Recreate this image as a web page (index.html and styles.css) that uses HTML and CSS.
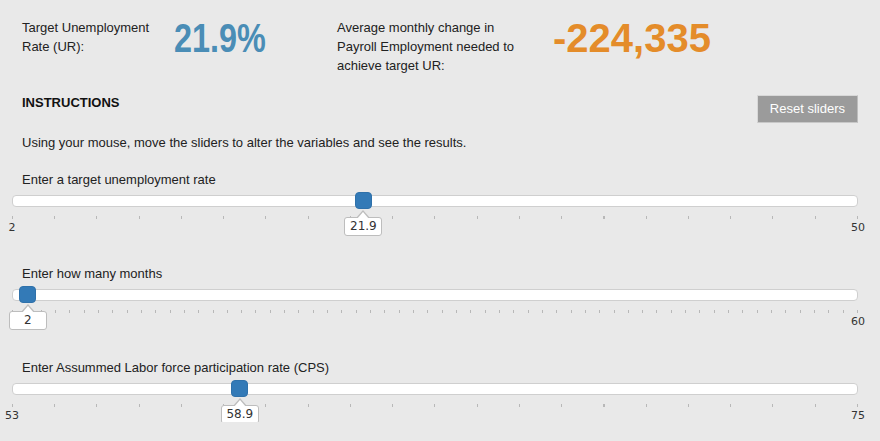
FILE: index.html
```html
<!DOCTYPE html>
<html lang="en">
<head>
  <meta charset="UTF-8" />
  <meta name="viewport" content="width=device-width, initial-scale=1.0"/>
  <title>Unemployment Rate Calculator</title>
  <link rel="stylesheet" href="styles.css">
</head>
<body>

  <div class="page">
    <div class="summary">
      <div class="summary-label label-ur">Target Unemployment Rate (UR):</div>
      <div class="big-number rate"><span>21.9%</span></div>
      <div class="summary-label label-change">Average monthly change in Payroll Employment needed to achieve target UR:</div>
      <div class="big-number change">-224,335</div>
    </div>

    <div class="instructions">
      <h4>INSTRUCTIONS</h4>
      <button class="resetBtn">Reset sliders</button>
    </div>

    <p class="hint">Using your mouse, move the sliders to alter the variables and see the results.</p>

    <div class="slider-group">
      <div class="slider-label">Enter a target unemployment rate</div>
      <div class="track">
        <div class="handle" style="left: 41.458%"><div class="tip">21.9</div></div>
      </div>
      <div class="pips"></div>
      <div class="pip-values"><span>2</span><span>50</span></div>
    </div>

    <div class="slider-group">
      <div class="slider-label">Enter how many months</div>
      <div class="track">
        <div class="handle" style="left: 1.695%"><div class="tip">2</div></div>
      </div>
      <div class="pips pips-59"></div>
      <div class="pip-values"><span>1</span><span>60</span></div>
    </div>

    <div class="slider-group">
      <div class="slider-label">Enter Assummed Labor force participation rate (CPS)</div>
      <div class="track">
        <div class="handle" style="left: 26.818%"><div class="tip">58.9</div></div>
      </div>
      <div class="pips"></div>
      <div class="pip-values"><span>53</span><span>75</span></div>
    </div>
  </div>

</body>
</html>
```

FILE: styles.css
```css
* {
  box-sizing: border-box;
}

body {
  margin: 0;
  background-color: #e9e9e9;
  font-family: "Liberation Sans", Arial, sans-serif;
  font-size: 13px;
  color: #222;
}

.page {
  padding: 18px 22px 0 12px;
}

/* Results at the top */
.summary {
  display: grid;
  grid-template-columns: 152px 163px 216px auto;
  padding-left: 10px;
}

.summary-label {
  line-height: 19px;
}

.label-ur {
  max-width: 140px;
}

.label-change {
  max-width: 185px;
}

.big-number {
  font-size: 40px;
  line-height: 40px;
  font-weight: bold;
}

/* the rate is shown in a narrow cut */
.rate {
  color: #4a8db6;
}

.rate span {
  display: inline-block;
  transform: scaleX(0.81);
  transform-origin: left center;
}

.change {
  color: #e48c2a;
}

.instructions {
  display: flex;
  justify-content: space-between;
  align-items: flex-start;
  margin-top: 20px;
}

.instructions h4 {
  margin: 0;
  padding-left: 10px;
  font-size: 13px;
  line-height: 16px;
  color: #111;
}

.resetBtn {
  font-family: "Liberation Sans", Arial, sans-serif;
  font-size: 13px;
  line-height: 16px;
  padding: 5px 12px;
  background-color: #9b9b9b;
  color: #fff;
  border: 1px solid #d8d8d8;
  border-right-color: #bdbdbd;
  border-bottom-color: #c8c8c8;
  cursor: pointer;
}

.hint {
  margin: 10px 0 0;
  padding-left: 10px;
  line-height: 19px;
}

/* Sliders */
.slider-group {
  margin-top: 18px;
}

.slider-group + .slider-group {
  margin-top: 30px;
}

.slider-label {
  padding-left: 10px;
  line-height: 19px;
  margin-bottom: 6px;
}

.track {
  position: relative;
  height: 12px;
  background: #fff;
  border: 1px solid #cfcfcf;
  border-radius: 4px;
}

.handle {
  position: absolute;
  top: -4px;
  width: 17px;
  height: 17px;
  margin-left: -8px;
  background-color: #337ab7;
  border: 1px solid #2f71aa;
  border-radius: 4px;
  z-index: 2;
}

.tip {
  position: absolute;
  top: 24px;
  left: 50%;
  transform: translateX(-50%);
  min-width: 38px;
  padding: 0 4px;
  background: #fff;
  border: 1px solid #bdbdbd;
  border-radius: 3px;
  font-family: "DejaVu Sans", Verdana, sans-serif;
  font-size: 12px;
  line-height: 17px;
  text-align: center;
  color: #333;
}

.tip::before,
.tip::after {
  content: '';
  position: absolute;
  left: 50%;
  border: solid transparent;
}

.tip::before {
  top: -8px;
  margin-left: -7px;
  border-width: 0 7px 8px;
  border-bottom-color: #bdbdbd;
}

.tip::after {
  top: -6px;
  margin-left: -6px;
  border-width: 0 6px 7px;
  border-bottom-color: #fff;
}

.pips {
  --n: 20;
  height: 3px;
  margin-top: 9px;
  margin-bottom: 1px;
  background: repeating-linear-gradient(to right, #b8b8b8 0 1px, transparent 1px calc((100% - 1px) / var(--n)));
}

.pips-59 {
  --n: 59;
}

.pip-values {
  display: flex;
  justify-content: space-between;
  margin-top: 2px;
  font-family: "DejaVu Sans", Verdana, sans-serif;
  font-size: 11px;
  line-height: 13px;
  color: #333;
}

.pip-values span:first-child {
  transform: translateX(-50%);
}

.pip-values span:last-child {
  transform: translateX(50%);
}
```
